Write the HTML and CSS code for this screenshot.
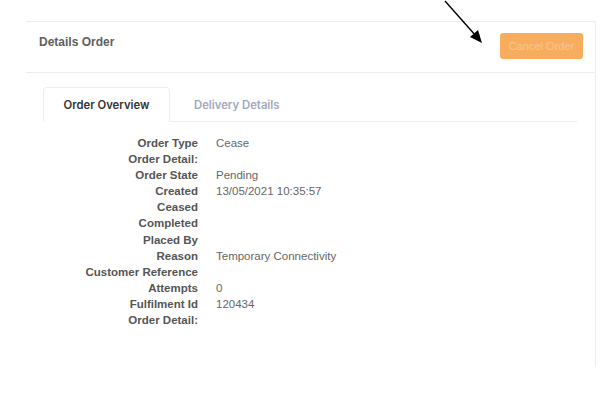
FILE: index.html
```html
<!DOCTYPE html>
<html>
<head>
<meta charset="utf-8">
<link rel="stylesheet" href="styles.css">
</head>
<body>
<div class="card">
  <div class="card-header">
    <h2 class="title">Details Order</h2>
    <button class="btn-cancel">Cancel Order</button>
  </div>
  <div class="card-body">
    <div class="tabs">
      <div class="tab active">Order Overview</div>
      <div class="tab">Delivery Details</div>
    </div>
    <dl class="details">
      <dt>Order Type</dt><dd>Cease</dd>
      <dt>Order Detail:</dt><dd></dd>
      <dt>Order State</dt><dd>Pending</dd>
      <dt>Created</dt><dd>13/05/2021 10:35:57</dd>
      <dt>Ceased</dt><dd></dd>
      <dt>Completed</dt><dd></dd>
      <dt>Placed By</dt><dd></dd>
      <dt>Reason</dt><dd>Temporary Connectivity</dd>
      <dt>Customer Reference</dt><dd></dd>
      <dt>Attempts</dt><dd>0</dd>
      <dt>Fulfilment Id</dt><dd>120434</dd>
      <dt>Order Detail:</dt><dd></dd>
    </dl>
  </div>
</div>
<svg class="arrow" width="60" height="60" viewBox="0 0 60 60">
  <line x1="2" y1="1" x2="33" y2="36" stroke="#000" stroke-width="1.4"/>
  <polygon points="39,43 27,37 35,30" fill="#000"/>
</svg>
</body>
</html>
```
FILE: styles.css
```css
html, body {
  margin: 0;
  padding: 0;
  background: #fff;
}
body {
  font-family: "Liberation Sans", Arial, sans-serif;
  position: relative;
  width: 602px;
  height: 412px;
  overflow: hidden;
}
.card {
  margin: 21px 0 0 26px;
  width: 570px;
  height: 346px;
  border-top: 1px solid #eceef2;
  border-right: 1px solid #eceef2;
  box-sizing: border-box;
}
.card-header {
  height: 51px;
  box-sizing: border-box;
  border-bottom: 1px solid #eceef2;
  display: flex;
  align-items: center;
  justify-content: space-between;
  padding: 0 12px 0 13px;
}
.title {
  margin: 0;
  font-size: 12px;
  font-weight: bold;
  color: #606060;
  position: relative;
  top: -5px;
}
.btn-cancel {
  width: 83px;
  height: 26px;
  border: none;
  border-radius: 3px;
  background: #f7ad5d;
  color: #f3c697;
  font-family: "Liberation Sans", Arial, sans-serif;
  font-size: 11px;
  padding: 0;
  position: relative;
  top: -1px;
}
.card-body {
  padding: 14px 18px 0 17px;
}
.tabs {
  display: flex;
  border-bottom: 1px solid #eceef2;
  height: 34px;
}
.tab {
  font-family: Inter, "Liberation Sans", sans-serif;
  font-size: 11.3px;
  font-weight: 600;
  color: #a3a8bd;
  padding: 0 24px;
  display: flex;
  align-items: center;
  box-sizing: border-box;
  height: 35px;
}
.tab.active {
  width: 127px;
  justify-content: center;
  color: #333;
  border: 1px solid #eceef2;
  border-bottom: 1px solid #fff;
  border-radius: 4px 4px 0 0;
  background: #fff;
  padding: 0;
}
.details {
  margin: 0;
  padding-top: 13px;
  display: grid;
  grid-template-columns: 155px 1fr;
  column-gap: 18px;
  font-size: 11.5px;
  line-height: 16.1px;
}
.details dt {
  text-align: right;
  font-weight: bold;
  color: #555;
}
.details dd {
  margin: 0;
  color: #666;
  min-height: 16px;
}
.arrow {
  position: absolute;
  left: 443px;
  top: 0;
}
```
